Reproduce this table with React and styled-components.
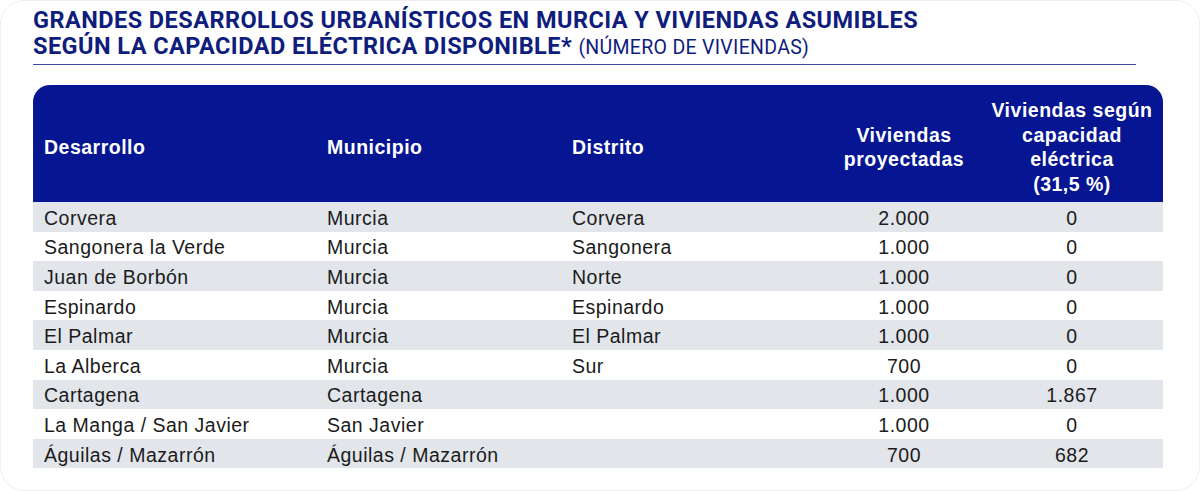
import React from 'react';
import styled, { createGlobalStyle } from 'styled-components';

const GlobalStyle = createGlobalStyle`
  html, body {
    margin: 0;
    padding: 0;
    background: #ffffff;
  }
  body {
    font-family: "Liberation Sans", Arial, sans-serif;
  }
`;

const Frame = styled.div`
  box-sizing: border-box;
  width: 1200px;
  height: 491px;
  border: 1px solid #efefef;
  border-radius: 24px;
  padding: 7px 37px 0 32px;
  overflow: hidden;
`;

const Heading = styled.div`
  color: #0f1d7c;
  border-bottom: 1.5px solid #3d4b9e;
  padding-bottom: 4px;
  margin-right: 26px;
`;

const TitleLine = styled.div`
  font-family: "Roboto", "Liberation Sans Narrow", sans-serif;
  font-weight: 700;
  font-size: 23.5px;
  line-height: 25.5px;
  letter-spacing: 0.45px;
`;

const Subtitle = styled.span`
  font-weight: 400;
  font-size: 19.5px;
  letter-spacing: 0.3px;
`;

const Table = styled.div`
  margin-top: 20px;
  width: 1130px;
  display: grid;
  grid-template-columns: 283px 245px 266px 154px 182px;
`;

const HeadCell = styled.div`
  background: #061591;
  color: #ffffff;
  font-weight: 700;
  font-size: 19.5px;
  letter-spacing: 0.5px;
  line-height: 24.5px;
  height: 117px;
  display: flex;
  align-items: center;
  justify-content: ${(p) => (p.$center ? 'center' : 'flex-start')};
  text-align: ${(p) => (p.$center ? 'center' : 'left')};
  padding-left: ${(p) => (p.$center ? '0' : '11px')};
  padding-top: 7px;
  box-sizing: border-box;
  border-top-left-radius: ${(p) => (p.$first ? '17px' : '0')};
  border-top-right-radius: ${(p) => (p.$last ? '17px' : '0')};
`;

const Cell = styled.div`
  background: ${(p) => (p.$shaded ? '#e2e6eb' : '#ffffff')};
  color: #1b1b1b;
  font-size: 19.5px;
  letter-spacing: 0.5px;
  height: 29.6px;
  display: flex;
  align-items: center;
  justify-content: ${(p) => (p.$center ? 'center' : 'flex-start')};
  padding-left: ${(p) => (p.$center ? '0' : '11px')};
  padding-top: 3px;
  box-sizing: border-box;
`;

const rows = [
  ['Corvera', 'Murcia', 'Corvera', '2.000', '0'],
  ['Sangonera la Verde', 'Murcia', 'Sangonera', '1.000', '0'],
  ['Juan de Borbón', 'Murcia', 'Norte', '1.000', '0'],
  ['Espinardo', 'Murcia', 'Espinardo', '1.000', '0'],
  ['El Palmar', 'Murcia', 'El Palmar', '1.000', '0'],
  ['La Alberca', 'Murcia', 'Sur', '700', '0'],
  ['Cartagena', 'Cartagena', '', '1.000', '1.867'],
  ['La Manga / San Javier', 'San Javier', '', '1.000', '0'],
  ['Águilas / Mazarrón', 'Águilas / Mazarrón', '', '700', '682'],
];

export default function App() {
  return (
    <>
      <GlobalStyle />
      <Frame>
        <Heading>
          <TitleLine>GRANDES DESARROLLOS URBANÍSTICOS EN MURCIA Y VIVIENDAS ASUMIBLES</TitleLine>
          <TitleLine>
            SEGÚN LA CAPACIDAD ELÉCTRICA DISPONIBLE* <Subtitle>(NÚMERO DE VIVIENDAS)</Subtitle>
          </TitleLine>
        </Heading>
        <Table>
          <HeadCell $first>Desarrollo</HeadCell>
          <HeadCell>Municipio</HeadCell>
          <HeadCell>Distrito</HeadCell>
          <HeadCell $center>
            Viviendas
            <br />
            proyectadas
          </HeadCell>
          <HeadCell $center $last>
            Viviendas según
            <br />
            capacidad
            <br />
            eléctrica
            <br />
            (31,5 %)
          </HeadCell>
          {rows.map((row, i) =>
            row.map((value, j) => (
              <Cell key={`${i}-${j}`} $shaded={i % 2 === 0} $center={j > 2}>
                {value}
              </Cell>
            ))
          )}
        </Table>
      </Frame>
    </>
  );
}
